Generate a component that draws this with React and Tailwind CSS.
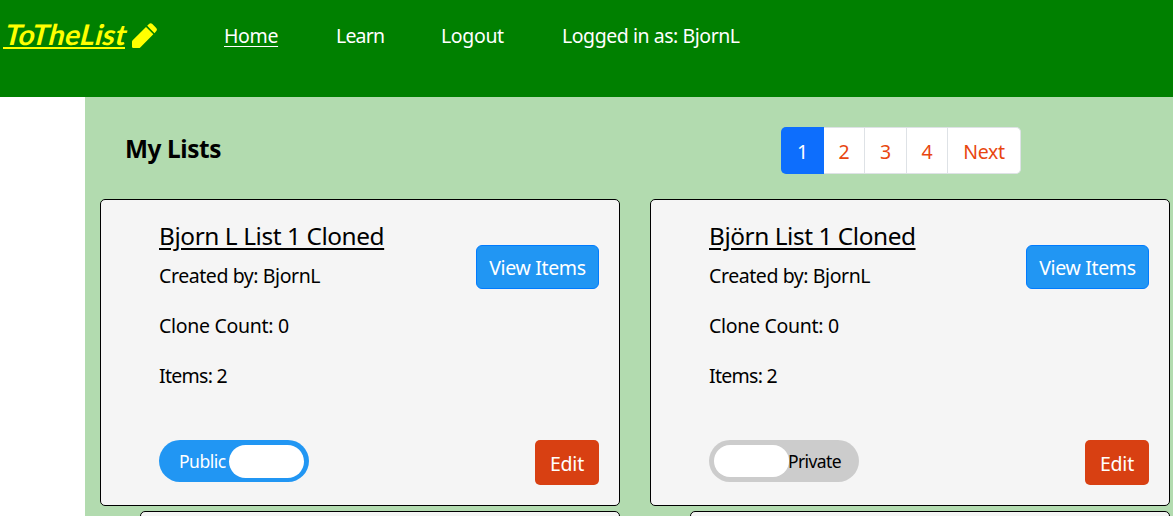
const links = [
  { label: "Home", cls: "w-[54px] underline underline-offset-[3px] tracking-[-0.35px]" },
  { label: "Learn", cls: "w-[47px] tracking-[-0.8px]" },
  { label: "Logout", cls: "w-[62px] tracking-[-0.35px]" },
  { label: "Logged in as: BjornL", cls: "pl-px tracking-[-0.45px]" },
];

const pages = [
  { label: "1", cls: "w-[43px] rounded-l-[5px] bg-[#0d6efd] leading-[49px] text-white" },
  { label: "2", cls: "w-[41px] border-y border-r border-[#dee2e6] bg-white leading-[47px] text-[#e84610]" },
  { label: "3", cls: "w-[42px] border-y border-r border-[#dee2e6] bg-white leading-[47px] text-[#e84610]" },
  { label: "4", cls: "w-[41px] border-y border-r border-[#dee2e6] bg-white leading-[47px] text-[#e84610]" },
  { label: "Next", cls: "w-[73px] rounded-r-[5px] border-y border-r border-[#dee2e6] bg-white leading-[47px] text-[#e84610] tracking-[-0.3px]" },
];

function PencilIcon({ className }) {
  return (
    <svg viewBox="0 0 75 75" fill="currentColor" className={className} aria-hidden="true">
      <path d="M0 56 Q0 54 2 52 L42 12 L64 34 L24 74 Q23 75 21 75 H4 Q0 75 0 71 Z" />
      <path d="M45.500 8.500 L51 3 Q56 -1.500 61 3 L72 14 Q77 19 73 24 L67.500 30.500 Z" />
    </svg>
  );
}

function Toggle({ isPublic }) {
  return isPublic ? (
    <div className="flex h-[42px] w-[150px] items-start justify-between rounded-full bg-[#2196f3] pt-[5px] pr-[5px] pl-5">
      <span className="text-[17.5px] leading-[32px] tracking-[-0.5px] text-white">Public</span>
      <span className="h-[33px] w-[75px] rounded-full bg-white" />
    </div>
  ) : (
    <div className="flex h-[42px] w-[150px] items-start rounded-full bg-[#ccc] pt-[5px] pl-[5px]">
      <span className="h-8 w-[75px] rounded-full bg-white" />
      <span className="-ml-px text-[17.5px] leading-[32px] tracking-[-0.6px] text-black">Private</span>
    </div>
  );
}

function Card({ title, titleCls, isPublic }) {
  return (
    <article className="flex h-[307px] w-[520px] flex-col justify-between rounded-[5px] border border-black bg-[#f5f5f5] pr-5 pb-5 pl-[58px]">
      <div className="flex justify-between">
        <div className="pt-[18px] text-[19.5px] tracking-[-0.42px]">
          <h2 className={`text-[24.4px] leading-[36px] underline underline-offset-[3px] ${titleCls}`}>{title}</h2>
          <p className="mt-[7px] leading-[30px]">Created by: BjornL</p>
          <p className="mt-5 leading-[30px] tracking-[-0.3px]">Clone Count: 0</p>
          <p className="mt-5 leading-[30px] tracking-[-0.7px]">Items: 2</p>
        </div>
        <button className="mt-[45px] h-11 w-[123px] rounded-[6px] border border-[#007bff] bg-[#2196f3] text-[19.5px] leading-[44px] tracking-[-0.35px] whitespace-nowrap text-white">
          View Items
        </button>
      </div>
      <div className="flex h-[45px] items-start justify-between">
        <Toggle isPublic={isPublic} />
        <button className="h-[45px] w-16 rounded-[5px] bg-[#d84012] text-[19.5px] leading-[47px] tracking-[-0.2px] text-white">Edit</button>
      </div>
    </article>
  );
}

export default function App() {
  return (
    <div className="flex h-[516px] w-[1173px] flex-col overflow-hidden bg-white font-['Noto_Sans',sans-serif] text-black">
      <header className="flex h-[97px] shrink-0 items-start bg-[#008000]">
        <a className="mt-[17px] ml-[3px] block h-8 w-[122px] border-b-2 border-[#ff0] text-[#ff0]">
          <span className="inline-block origin-[0_28px] -skew-x-[14deg] font-[Lato,sans-serif] text-[28.5px] leading-[34px] font-bold tracking-[0.2px] whitespace-nowrap">
            ToTheList
          </span>
        </a>
        <PencilIcon className="mt-[23px] ml-[7px] size-[25px] text-[#ff0]" />
        <nav className="mt-[21px] ml-[67px] flex gap-[58px] text-[19.5px] leading-[30px] whitespace-nowrap text-white">
          {links.map((l) => (
            <a key={l.label} className={l.cls}>{l.label}</a>
          ))}
        </nav>
      </header>
      <main className="ml-[85px] flex grow flex-col bg-[#b2dbaf] pl-[15px]">
        <div className="flex h-[102px] shrink-0 items-start">
          <h1 className="mt-[34px] ml-[25px] w-[656px] text-[24.4px] leading-[36px] font-bold tracking-[-0.4px]">My Lists</h1>
          <div className="mt-[30px] flex h-[47px] text-[19.5px]">
            {pages.map((p) => (
              <a key={p.label} className={`text-center ${p.cls}`}>{p.label}</a>
            ))}
          </div>
        </div>
        <div className="flex shrink-0 gap-[30px]">
          <Card title="Bjorn L List 1 Cloned" titleCls="tracking-[-0.42px]" isPublic />
          <Card title="Björn List 1 Cloned" titleCls="tracking-[-0.44px]" />
        </div>
        <div className="mt-[5px] flex gap-[70px] pl-10">
          <div className="h-10 w-[480px] shrink-0 rounded-[5px] border border-black bg-[#f5f5f5]" />
          <div className="h-10 w-[480px] shrink-0 rounded-[5px] border border-black bg-[#f5f5f5]" />
        </div>
      </main>
    </div>
  );
}
